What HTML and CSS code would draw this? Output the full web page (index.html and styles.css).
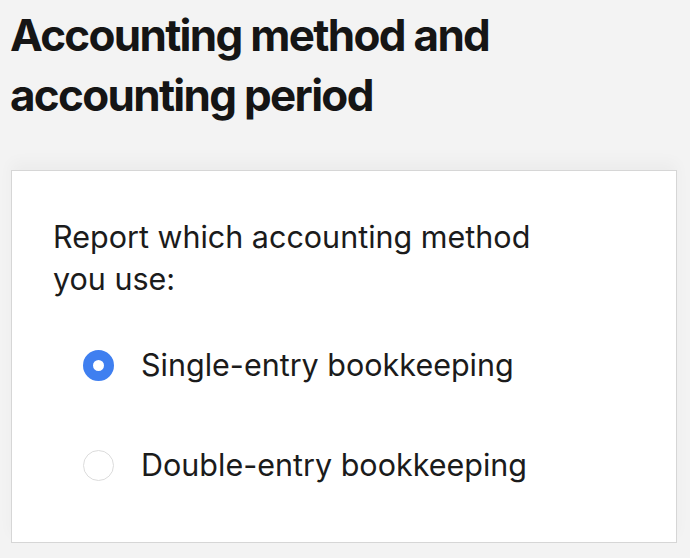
FILE: index.html
```html
<!DOCTYPE html>
<html lang="en">
<head>
    <meta charset="UTF-8">
    <meta name="viewport" content="width=device-width, initial-scale=1.0">
    <title>Accounting method and accounting period</title>
    <link rel="stylesheet" href="styles.css">
</head>
<body>
    <h1 class="page-title">Accounting method and accounting period</h1>

    <div class="card">
        <p class="question">Report which accounting method you use:</p>

        <div class="options">
            <label class="option">
                <span class="radio checked"></span>
                <span>Single-entry bookkeeping</span>
            </label>
            <label class="option">
                <span class="radio"></span>
                <span>Double-entry bookkeeping</span>
            </label>
        </div>
    </div>
</body>
</html>
```

FILE: styles.css
```css
body {
    margin: 0;
    padding: 0 13px 0 11px;
    background-color: #f3f3f3;
    font-family: 'Inter', 'Noto Sans', sans-serif;
    color: #1b1b1b;
}

/* Titel */
.page-title {
    margin: 0 0 0 -1px;
    padding-top: 5px;
    width: 520px;
    font-size: 44px;
    font-weight: 700;
    line-height: 60px;
    letter-spacing: -1.7px;
    color: #151515;
}

/* Kaart */
.card {
    margin-top: 45px;
    background: #fff;
    border: 1px solid #d6d6d6;
    box-shadow: 0 -8px 14px rgba(0,0,0,0.03);
    padding: 45px 40px 57px 41px;
}

.question {
    margin: 0;
    width: 500px;
    font-size: 30.5px;
    line-height: 42px;
}

.options {
    display: flex;
    flex-direction: column;
    gap: 60px;
    margin-top: 45px;
    padding-left: 30px;
}

.option {
    display: flex;
    align-items: center;
    gap: 27px;
    font-size: 30.5px;
    line-height: 40px;
}

.radio {
    width: 31px;
    height: 31px;
    box-sizing: border-box;
    border-radius: 50%;
    border: 1px solid #dcdcdc;
    background: #fff;
    flex-shrink: 0;
}

.radio.checked {
    border: 10px solid #3f7ff0;
    background: #fff;
}
```
